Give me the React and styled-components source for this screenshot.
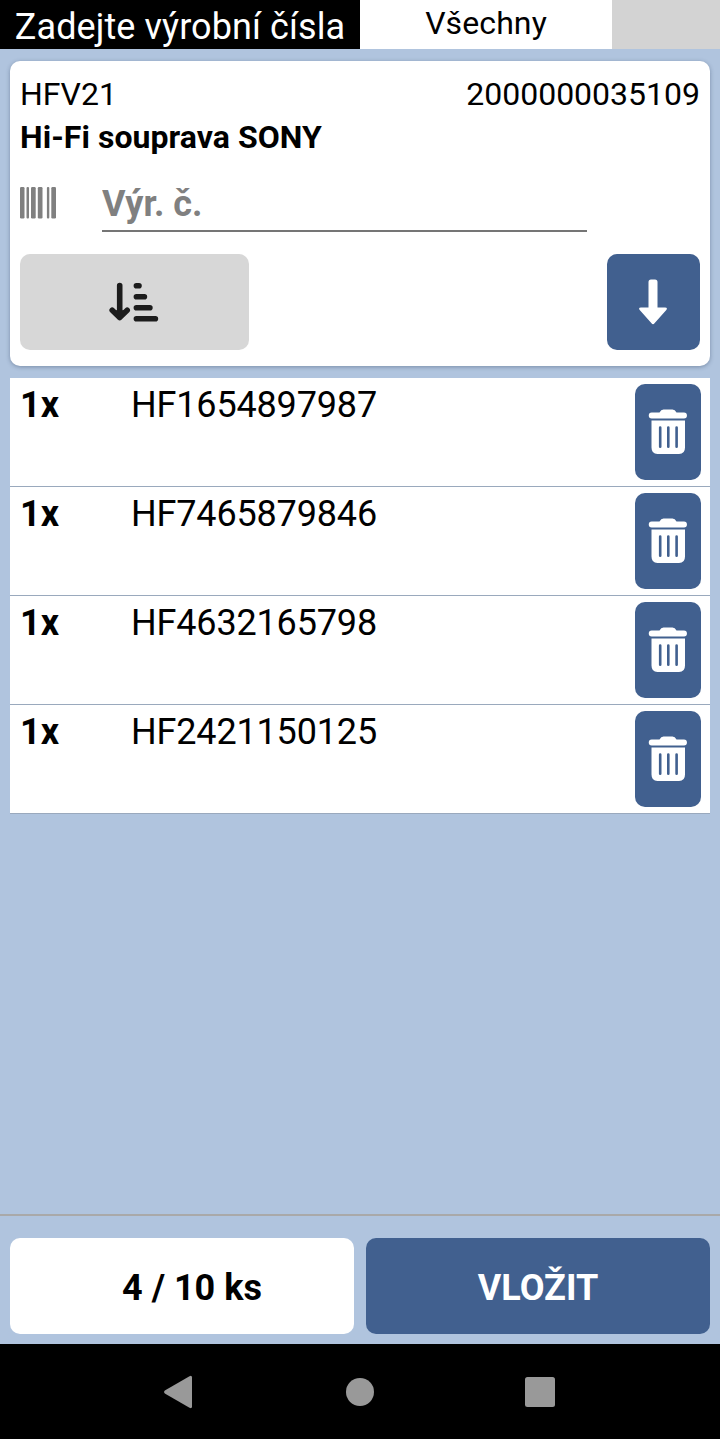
import React from "react";
import styled, { createGlobalStyle } from "styled-components";

const Global = createGlobalStyle`
  * { box-sizing: border-box; }
  body { margin: 0; background: #b0c4de; font-family: Roboto, "Liberation Sans", sans-serif; color: #000; }
  button { font: inherit; border: 0; padding: 0; }
  svg { display: block; }
`;

const Screen = styled.div`
  width: 720px;
  height: 1439px;
  display: flex;
  flex-direction: column;
  background: #b0c4de;
  overflow: hidden;
`;

const Header = styled.header`
  display: grid;
  grid-template-columns: 360px 252px 1fr;
  height: 49px;
  flex: none;
`;

const Title = styled.h1`
  margin: 0;
  padding-top: 5px;
  background: #000;
  color: #fff;
  font-size: 36px;
  font-weight: 400;
  line-height: 44px;
  letter-spacing: 0.09px;
  text-align: center;
  white-space: nowrap;
`;

const FilterTab = styled.div`
  background: #fff;
  font-size: 32px;
  line-height: 46px;
  letter-spacing: 0.1px;
  text-align: center;
`;

const EmptyTab = styled.div`
  background: #d3d3d3;
`;

const Card = styled.section`
  margin: 12px 10px 0;
  padding: 12px 10px 0;
  height: 305px;
  flex: none;
  background: #fff;
  border-radius: 10px;
  box-shadow: 0 1px 4px rgba(40, 60, 90, 0.4);
`;

const CodeLine = styled.div`
  display: flex;
  justify-content: space-between;
  font-size: 32px;
  line-height: 42px;
`;

const ProductName = styled.div`
  font-size: 32px;
  font-weight: 700;
  line-height: 44px;
  letter-spacing: 0.05px;
`;

const SerialLine = styled.div`
  display: flex;
  align-items: flex-start;
  margin-top: 17px;
  height: 56px;
`;

const BarcodeBox = styled.div`
  width: 82px;
  padding-top: 11px;
`;

const SerialInput = styled.input`
  width: 485px;
  height: 56px;
  padding: 1px 0 0;
  border: 0;
  border-bottom: 2px solid #757575;
  border-radius: 0;
  outline: 0;
  background: transparent;
  font: 700 36px/52px Roboto, "Liberation Sans", sans-serif;
  &::placeholder { color: #808080; opacity: 1; }
`;

const CardActions = styled.div`
  display: flex;
  justify-content: space-between;
  margin-top: 22px;
`;

const Button = styled.button`
  display: flex;
  align-items: center;
  justify-content: center;
  width: ${(p) => p.$width};
  height: 96px;
  flex: none;
  padding: ${(p) => p.$inset || "0"};
  border-radius: 10px;
  background: ${(p) => (p.$muted ? "#d7d7d7" : "#41608f")};
  color: ${(p) => (p.$muted ? "#1c1c1c" : "#fff")};
  font-size: 36px;
  font-weight: 700;
`;

const List = styled.ul`
  list-style: none;
  margin: 12px 10px 0;
  padding: 0;
`;

const Item = styled.li`
  display: flex;
  height: 109px;
  padding: 6px 9px 0 10px;
  background: #fff;
  border-bottom: 1px solid #9aa9bd;
  font-size: 36px;
  line-height: 42px;
`;

const Quantity = styled.span`
  width: 111px;
  font-weight: 700;
`;

const Serial = styled.span`
  flex: 1;
  letter-spacing: -0.16px;
`;

const Footer = styled.footer`
  display: flex;
  gap: 12px;
  height: 130px;
  flex: none;
  margin-top: auto;
  padding: 22px 10px 0;
  border-top: 2px solid #a9a9a9;
`;

const Counter = styled.div`
  width: 344px;
  height: 96px;
  padding-left: 20px;
  border-radius: 10px;
  background: #fff;
  font-size: 36px;
  font-weight: 700;
  line-height: 100px;
  text-align: center;
`;

const NavBar = styled.nav`
  display: grid;
  grid-template-columns: repeat(3, 180px);
  justify-content: center;
  justify-items: center;
  align-items: center;
  height: 95px;
  flex: none;
  background: #000;
  color: #999;
`;

const BarcodeIcon = () => (
  <svg width="36" height="32" viewBox="0 0 36 32" fill="#808080">
    <rect x="0" y="0" width="4.5" height="31.500" rx="1.200" />
    <rect x="6.500" y="0" width="2.500" height="31.500" rx="1" />
    <rect x="11" y="0" width="4.700" height="31.500" rx="1.200" />
    <rect x="17.800" y="0" width="4.700" height="31.500" rx="1.200" />
    <rect x="26.900" y="0" width="2.400" height="31.500" rx="1" />
    <rect x="31.300" y="0" width="4.700" height="31.500" rx="1.200" />
  </svg>
);

const SortIcon = () => (
  <svg width="50" height="40" viewBox="0 0 50 40" fill="none" stroke="currentColor" strokeWidth="5.6" strokeLinecap="round" strokeLinejoin="round">
    <path d="M10.700 3.500v32M3.200 28.300l7.500 7.300 7.500-7.300M27.400 3.800h2.600M27.400 14.800h8M27.400 25.800h13.500M27.400 36.700h19" />
    <path fill="currentColor" stroke="none" d="M4 28.300h13.400L10.700 36Z" />
  </svg>
);

const ArrowIcon = () => (
  <svg width="28" height="46" viewBox="0 0 28 46" fill="currentColor">
    <path d="M9.500 3Q9.500.5 12 .5h4q2.500 0 2.500 2.500V28.500H26Q29 28.500 27.300 31L15.500 44.300Q14 46 12.500 44.300L.7 31Q-1 28.500 2 28.500H9.500Z" />
  </svg>
);

const TrashIcon = () => (
  <svg width="40" height="46" viewBox="0 0 40 46">
    <path fill="currentColor" d="M3.700 3.600H11.500Q13 .5 15.500.5h9Q27 .5 28.500 3.600h7.500a2.900 2.900 0 0 1 0 5.900h-32.300a2.900 2.900 0 0 1 0-5.900ZM3.500 11.500h33.500V38.500q0 6.500-6 6.500H9.500q-6 0-6-6.500Z" />
    <path stroke="#41608f" strokeWidth="2.6" strokeLinecap="round" d="M12.200 18.500v19.200M20.300 18.500v19.200M28.600 18.500v19.200" />
  </svg>
);

const serials = ["HF1654897987", "HF7465879846", "HF4632165798", "HF2421150125"];

export default function App() {
  return (
    <Screen>
      <Global />
      <Header>
        <Title>Zadejte výrobní čísla</Title>
        <FilterTab>Všechny</FilterTab>
        <EmptyTab />
      </Header>
      <Card>
        <CodeLine>
          <span>HFV21</span>
          <span>2000000035109</span>
        </CodeLine>
        <ProductName>Hi-Fi souprava SONY</ProductName>
        <SerialLine>
          <BarcodeBox>
            <BarcodeIcon />
          </BarcodeBox>
          <SerialInput placeholder="Výr. č." />
        </SerialLine>
        <CardActions>
          <Button $muted $width="229px" $inset="0 2px 1px 0">
            <SortIcon />
          </Button>
          <Button $width="93px" $inset="0 2px 1px 0">
            <ArrowIcon />
          </Button>
        </CardActions>
      </Card>
      <List>
        {serials.map((serial) => (
          <Item key={serial}>
            <Quantity>1x</Quantity>
            <Serial>{serial}</Serial>
            <Button $width="66px">
              <TrashIcon />
            </Button>
          </Item>
        ))}
      </List>
      <Footer>
        <Counter>4 / 10 ks</Counter>
        <Button $width="344px" $inset="4px 0 0">
          VLOŽIT
        </Button>
      </Footer>
      <NavBar>
        <svg width="34" height="34" viewBox="0 0 34 34" fill="currentColor">
          <path d="M1.800 15.600 26.500 1.200Q29 0 29 2.500V31.500Q29 34 26.500 32.800L1.800 18.400Q0 17 1.800 15.600Z" />
        </svg>
        <svg width="28" height="28" viewBox="0 0 28 28" fill="currentColor">
          <circle cx="14" cy="14" r="14" />
        </svg>
        <svg width="30" height="30" viewBox="0 0 30 30" fill="currentColor">
          <rect width="30" height="30" rx="2.500" />
        </svg>
      </NavBar>
    </Screen>
  );
}
